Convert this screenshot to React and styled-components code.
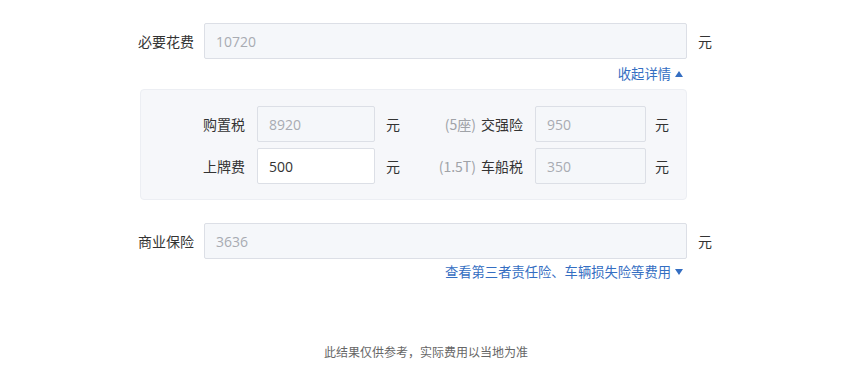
import React from "react";
import styled, { createGlobalStyle } from "styled-components";

const Global = createGlobalStyle`
  html, body { margin: 0; padding: 0; background: #fff; }
  body { font-family: "Noto Sans CJK SC", "Noto Sans", sans-serif; color: #333; }
  * { box-sizing: border-box; }
`;

const Page = styled.div`
  width: 576px;
  margin: 0 auto;
  padding-top: 23px;
  display: flex;
  flex-direction: column;
`;

const Row = styled.div`
  display: grid;
  grid-template-columns: 66px 483px 1fr;
  align-items: center;
  margin-top: ${(p) => p.$mt || 0}px;
`;

const Label = styled.div`
  font-size: 14px;
  color: #333;
  text-align: right;
  padding-right: 12px;
  line-height: 20px;
  white-space: nowrap;
`;

const Input = styled.div`
  height: 36px;
  display: flex;
  align-items: center;
  padding-left: 11px;
  font-family: "Open Sans", "Noto Sans CJK SC", sans-serif;
  font-size: 14px;
  border: 1px solid #dcdfe6;
  border-radius: 2px;
  background: ${(p) => (p.$active ? "#fff" : "#f5f7fa")};
  color: ${(p) => (p.$active ? "#333" : "#a8abb2")};
`;

const Unit = styled.div`
  font-size: 14px;
  color: #333;
  padding-left: ${(p) => p.$pl || 11}px;
  line-height: 20px;
`;

const LinkRow = styled.div`
  display: flex;
  justify-content: flex-end;
  width: 549px;
  padding-right: 4px;
  margin-top: ${(p) => p.$mt || 0}px;
`;

const Link = styled.a`
  display: inline-flex;
  align-items: center;
  gap: 4px;
  font-size: 13.3px;
  line-height: 20px;
  color: #346ec2;
  cursor: pointer;
  text-decoration: none;
`;

const Panel = styled.div`
  width: 547px;
  margin-left: 2px;
  margin-top: 5px;
  padding: 16px 0 15px;
  background: #f6f7fa;
  border: 1px solid #eceef3;
  border-radius: 4px;
  display: grid;
  grid-template-columns: 116px 118px 25px 135px 111px auto;
  row-gap: 6px;
  align-items: center;
`;

const Hint = styled.span`
  color: #a0a3a8;
  margin-right: 5px;
`;

const Footer = styled.div`
  margin-top: 61px;
  text-align: center;
  font-size: 12px;
  line-height: 18px;
  color: #666;
`;

const Tri = ({ up }) => (
  <svg width="8" height="6" viewBox="0 0 8 6">
    <polygon points={up ? "4,0 8,6 0,6" : "0,0 8,0 4,6"} fill="#346ec2" />
  </svg>
);

export default function App() {
  return (
    <>
      <Global />
      <Page>
        <Row>
          <Label>必要花费</Label>
          <Input>10720</Input>
          <Unit>元</Unit>
        </Row>
        <LinkRow $mt={5}>
          <Link>
            收起详情
            <Tri up />
          </Link>
        </LinkRow>
        <Panel>
          <Label>购置税</Label>
          <Input>8920</Input>
          <Unit>元</Unit>
          <Label>
            <Hint>(5座)</Hint>交强险
          </Label>
          <Input>950</Input>
          <Unit $pl={9}>元</Unit>

          <Label>上牌费</Label>
          <Input $active>500</Input>
          <Unit>元</Unit>
          <Label>
            <Hint>(1.5T)</Hint>车船税
          </Label>
          <Input>350</Input>
          <Unit $pl={9}>元</Unit>
        </Panel>
        <Row $mt={23}>
          <Label>商业保险</Label>
          <Input>3636</Input>
          <Unit>元</Unit>
        </Row>
        <LinkRow $mt={3}>
          <Link>
            查看第三者责任险、车辆损失险等费用
            <Tri />
          </Link>
        </LinkRow>
        <Footer>此结果仅供参考，实际费用以当地为准</Footer>
      </Page>
    </>
  );
}
